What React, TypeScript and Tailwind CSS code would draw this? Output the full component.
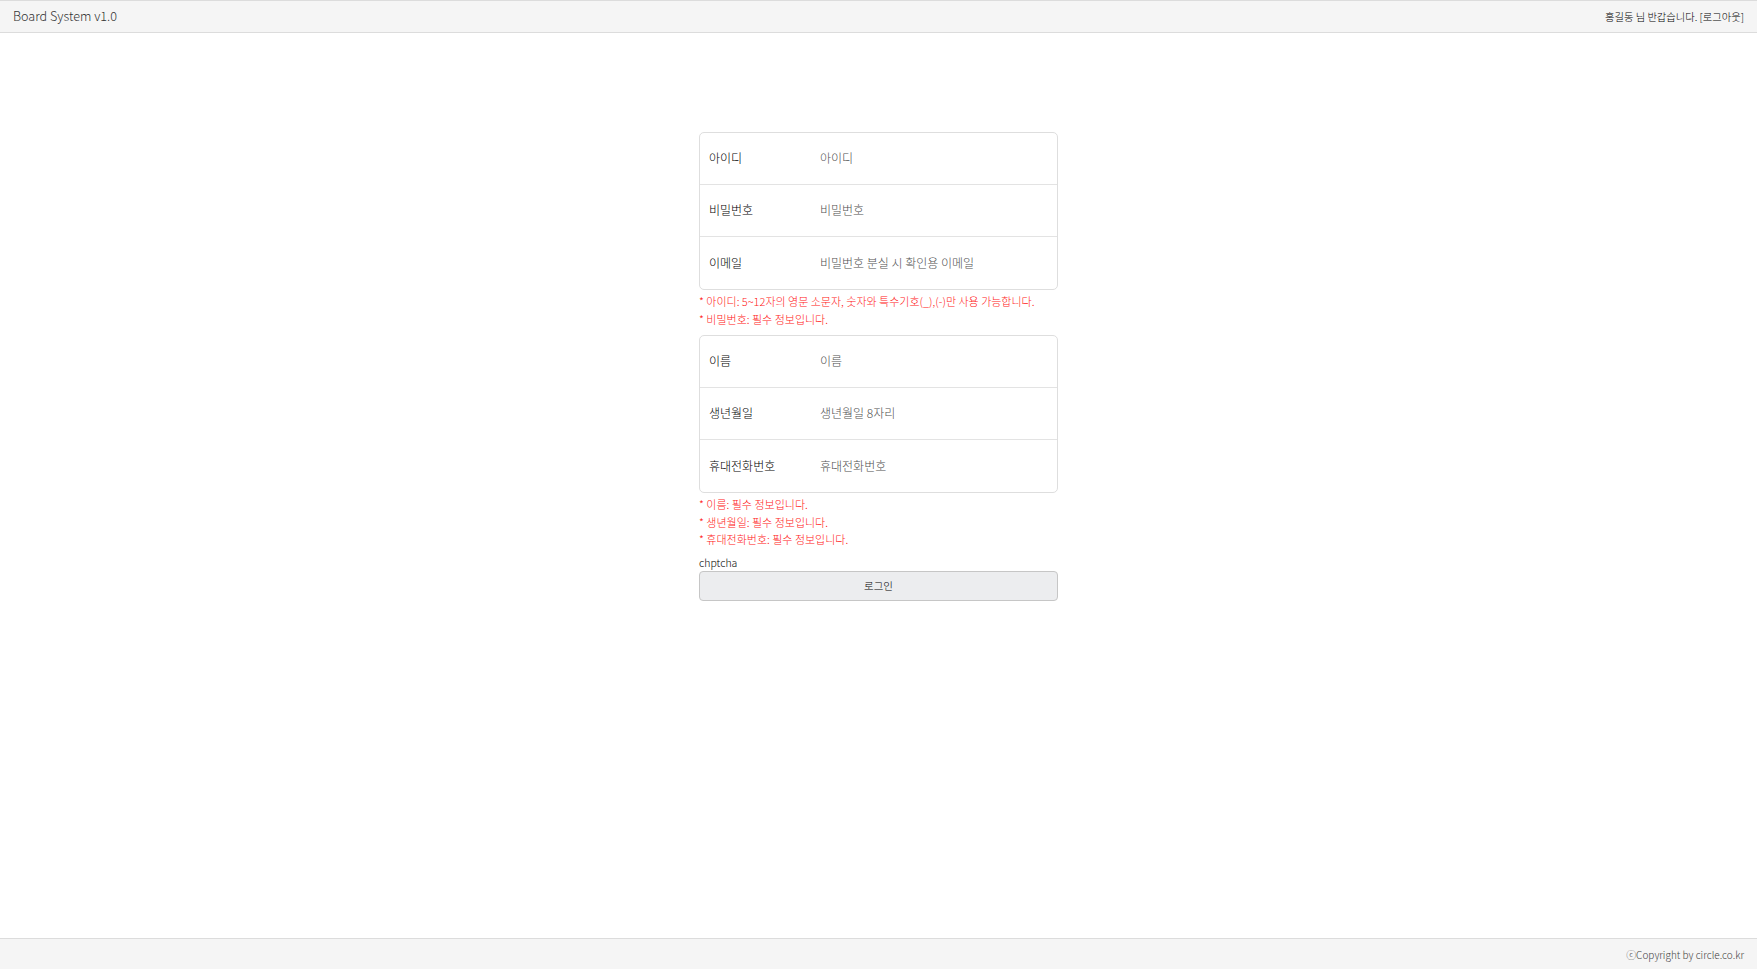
const font = "font-['Noto_Sans_CJK_KR','Noto_Sans',sans-serif]"

const account = [
  { label: "아이디", placeholder: "아이디" },
  { label: "비밀번호", placeholder: "비밀번호" },
  { label: "이메일", placeholder: "비밀번호 분실 시 확인용 이메일" },
]

const profile = [
  { label: "이름", placeholder: "이름" },
  { label: "생년월일", placeholder: "생년월일 8자리" },
  { label: "휴대전화번호", placeholder: "휴대전화번호" },
]

function FieldBox({ rows }: { rows: { label: string; placeholder: string }[] }) {
  return (
    <div className="border border-[#dedede] rounded-[5px] bg-white">
      {rows.map((row, i) => (
        <div
          key={row.label}
          className={`flex items-center h-[52px] pb-[1px] ${i < rows.length - 1 ? "border-b border-[#e3e3e3]" : ""}`}
        >
          <div className="w-[120px] pl-[9px] text-[12px] font-light text-black">{row.label}</div>
          <div className="flex-1 text-[12px] font-light text-[#505050]">{row.placeholder}</div>
        </div>
      ))}
    </div>
  )
}

function Errors({ lines }: { lines: string[] }) {
  return (
    <div className="pt-[3px] pb-[2px]">
      {lines.map((line) => (
        <p key={line} className="text-[11px] leading-[17.5px] font-light text-[#ff2020]">
          * {line}
        </p>
      ))}
    </div>
  )
}

export default function App() {
  return (
    <div className={`min-h-screen flex flex-col bg-white ${font}`}>
      <header className="h-[33px] flex items-center justify-between px-[13px] bg-[#f5f5f5] border-y border-[#dcdcdc]">
        <span className="text-[12.6px] font-light text-[#333]">Board System v1.0</span>
        <span className="text-[10.3px] font-light text-black">
          홍길동 님 반갑습니다. [로그아웃]
        </span>
      </header>

      <main className="flex-1 flex justify-center pt-[99px]">
        <div className="w-[359px]">
          <FieldBox rows={account} />
          <Errors
            lines={[
              "아이디: 5~12자의 영문 소문자, 숫자와 특수기호(_),(-)만 사용 가능합니다.",
              "비밀번호: 필수 정보입니다.",
            ]}
          />
          <div className="mt-[5px]">
            <FieldBox rows={profile} />
          </div>
          <Errors
            lines={["이름: 필수 정보입니다.", "생년월일: 필수 정보입니다.", "휴대전화번호: 필수 정보입니다."]}
          />
          <div className="mt-[5px] text-[10.5px] leading-[14px] font-light text-black">chptcha</div>
          <button className="mt-[1px] w-full h-[30px] rounded-[4px] border border-[#c6c6c6] bg-[#ecedef] text-[10.5px] font-light text-black">
            로그인
          </button>
        </div>
      </main>

      <footer className="h-[31px] flex items-center justify-end px-[13px] bg-[#f5f5f5] border-t border-[#dcdcdc]">
        <span className="text-[10px] font-light text-[#444]">ⓒCopyright by circle.co.kr</span>
      </footer>
    </div>
  )
}
